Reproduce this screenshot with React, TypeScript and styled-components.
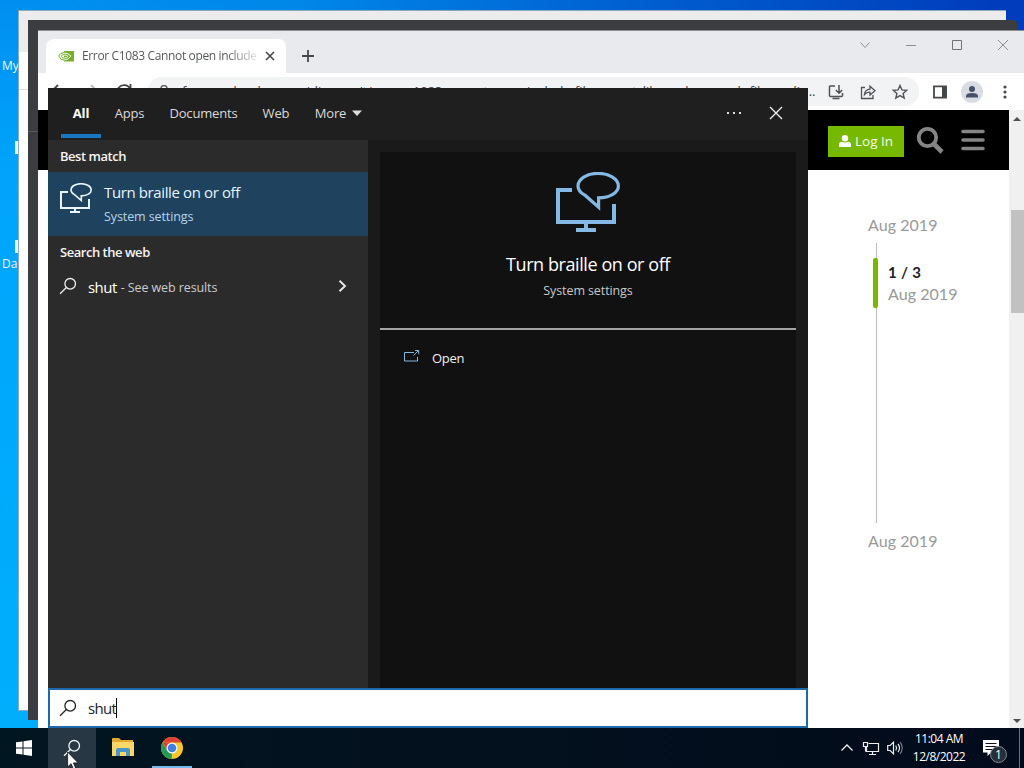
import type { ReactNode } from "react";
import styled, { createGlobalStyle } from "styled-components";

const ui = `"Open Sans", "Noto Sans", sans-serif`;

export default function App() {
    return (
        <>
            <GlobalStyle />
            <Screen>
                <Desktop>
                    <DesktopIcon $top={57}>My</DesktopIcon>
                    <IconEdge $top={141} />
                    <IconEdge $top={240} />
                    <DesktopIcon $top={255}>Da</DesktopIcon>
                    <LightWindow>
                        <LightTitle />
                        <LightLine />
                    </LightWindow>
                    <DarkWindow>
                        <DarkLine />
                    </DarkWindow>
                    <Browser />
                    <SearchPanel />
                </Desktop>
                <Taskbar />
                <Pointer viewBox="0 0 12 19">
                    <path d="M.6 1v15l3.5-3.3 2.3 5.4 2.3-1-2.3-5.2h4.8z" fill="#fff" stroke="#111" strokeWidth=".8" />
                </Pointer>
            </Screen>
        </>
    );
}

const Browser = () => (
    <BrowserWindow>
        <TabStrip>
            <Tab>
                <NvidiaIcon />
                <TabTitle>Error C1083 Cannot open include</TabTitle>
                <Icon $size={10} $color="#45484b" viewBox="0 0 10 10">
                    <path d="M1 1l8 8M9 1L1 9" strokeWidth="1.6" />
                </Icon>
            </Tab>
            <NewTab>
                <Icon $size={14} $color="#45484b" viewBox="0 0 14 14">
                    <path d="M7 1v12M1 7h12" strokeWidth="1.8" />
                </Icon>
            </NewTab>
            <WindowButtons>
                <Icon $size={12} $color="#8b8d91" viewBox="0 0 12 12">
                    <path d="M1.5 3.5L6 8.5l4.500-5" />
                </Icon>
                <Icon $size={12} $color="#8b8d91" viewBox="0 0 12 12">
                    <path d="M1 6.500h10" />
                </Icon>
                <Icon $size={12} $color="#707276" viewBox="0 0 12 12">
                    <path d="M1.500 1.500h9v9h-9z" />
                </Icon>
                <Icon $size={12} $color="#8b8d91" viewBox="0 0 12 12">
                    <path d="M1 1l10 10M11 1L1 11" />
                </Icon>
            </WindowButtons>
        </TabStrip>
        <Toolbar>
            <NavButtons>
                <Icon $size={16} $color="#45484b" viewBox="0 0 16 16">
                    <path d="M8 1L1 8l7 7M1 8h14" strokeWidth="1.8" />
                </Icon>
                <Icon $size={16} $color="#babcbe" viewBox="0 0 16 16">
                    <path d="M8 1l7 7-7 7M15 8H1" strokeWidth="1.8" />
                </Icon>
                <Icon $size={16} $color="#45484b" viewBox="0 0 16 16">
                    <path d="M14 4.500A7 7 0 1 0 15 9M14.500 0v5h-5" strokeWidth="1.800" />
                </Icon>
            </NavButtons>
            <AddressBar>
                <Icon $size={14} $color="#5f6368" viewBox="0 0 14 14">
                    <path d="M4 6V3.500a3 3 0 0 1 6 0V6M2.500 6h9v7h-9z" strokeWidth="1.500" />
                </Icon>
                <Address>
                    forums.developer.nvidia.com/t/error-c1083-cannot-open-include-file-exportslibrary-h-no-such-file-or-dir...
                </Address>
                <Icon $size={18} $color="#505357" viewBox="0 0 18 18">
                    <path d="M8 3H3.200Q2.500 3 2.500 4v8.500q0 1 1 1h11q1 0 1-1V10M5.500 15.500h7M12 2v8M8.800 7l3.200 3.200L15.200 7" strokeWidth="1.500" />
                </Icon>
                <Icon $size={18} $color="#505357" viewBox="0 0 18 18">
                    <path d="M6 4.500H2.500v11h11.500V12M5.500 11.500Q6 6.500 11 6.200V3.200L16 7.800l-5 4.200V9.200Q7.500 9 5.500 11.500z" strokeWidth="1.300" />
                </Icon>
                <Icon $size={18} $color="#505357" viewBox="0 0 18 18">
                    <path d="M9 2.500l1.900 4.400 4.800.4-3.600 3.100 1.100 4.700L9 12.600l-4.200 2.500 1.100-4.700-3.600-3.100 4.800-.4z" strokeWidth="1.400" />
                </Icon>
            </AddressBar>
            <ToolbarIcons>
                <Icon $size={14} $color="#45484b" viewBox="0 0 14 14">
                    <path d="M1 1.300h12v11.400H1z" strokeWidth="1.800" />
                    <path d="M9 1h4.500v12H9z" fill="currentColor" stroke="none" />
                </Icon>
                <Avatar>
                    <Icon $size={14} $color="#45506a" viewBox="0 0 14 14">
                        <g fill="currentColor" stroke="none">
                            <circle cx="7" cy="4" r="3" />
                            <path d="M1 12.500V11q0-3 6-3t6 3v1.500z" />
                        </g>
                    </Icon>
                </Avatar>
                <Icon $size={14} $color="#45484b" viewBox="0 0 14 14">
                    <g fill="currentColor" stroke="none">
                        <circle cx="7" cy="2" r="1.600" />
                        <circle cx="7" cy="7" r="1.600" />
                        <circle cx="7" cy="12" r="1.600" />
                    </g>
                </Icon>
            </ToolbarIcons>
        </Toolbar>
        <PageArea>
            <Page>
                <SiteHeader>
                    <LoginButton>
                        <Icon $size={12} $color="#fff" viewBox="0 0 12 12">
                            <g fill="currentColor" stroke="none">
                                <circle cx="6" cy="3.300" r="3.200" />
                                <path d="M0 12V9.500Q0 7 3 6.700q3 1.500 6 0 3 .3 3 2.800V12z" />
                            </g>
                        </Icon>
                        Log In
                    </LoginButton>
                    <Icon $size={28} $color="#858585" viewBox="0 0 28 28">
                        <circle cx="11.500" cy="11.500" r="8.700" strokeWidth="3.800" />
                        <path d="M18 18l8 8" strokeWidth="4.600" />
                    </Icon>
                    <Icon $size={24} $color="#858585" viewBox="0 0 24 24">
                        <path d="M2 3.500h20M2 12h20M2 20.500h20" strokeWidth="3.600" strokeLinecap="round" />
                    </Icon>
                </SiteHeader>
                <Timeline>
                    <TimelineDate>Aug 2019</TimelineDate>
                    <TimelineTrack>
                        <TimelineHandle />
                        <TimelinePosition>
                            <strong>1 / 3</strong>
                            <TimelineDate>Aug 2019</TimelineDate>
                        </TimelinePosition>
                    </TimelineTrack>
                    <TimelineDate>Aug 2019</TimelineDate>
                </Timeline>
            </Page>
            <Scrollbar>
                <Icon $size={8} $color="#505050" viewBox="0 0 8 8">
                    <path d="M0 6l4-4 4 4z" fill="currentColor" stroke="none" />
                </Icon>
                <Thumb />
                <Icon $size={8} $color="#505050" viewBox="0 0 8 8">
                    <path d="M0 2l4 4 4-4z" fill="currentColor" stroke="none" />
                </Icon>
            </Scrollbar>
        </PageArea>
    </BrowserWindow>
);

const SearchPanel = () => (
    <Panel>
        <PanelHeader>
            <Scope $width={40} $active>All</Scope>
            <Scope $width={57}>Apps</Scope>
            <Scope $width={91}>Documents</Scope>
            <Scope $width={54}>Web</Scope>
            <Scope $width={71}>
                More
                <Icon $size={10} $color="#ddd" viewBox="0 0 10 10">
                    <path d="M0 2.500h10L5 8z" fill="currentColor" stroke="none" />
                </Icon>
            </Scope>
            <HeaderButtons>
                <Icon $size={16} $color="#ddd" viewBox="0 0 16 16">
                    <path d="M1 7h2v2H1zM7 7h2v2H7zM13 7h2v2h-2z" fill="currentColor" stroke="none" />
                </Icon>
                <Icon $size={14} $color="#eee" viewBox="0 0 14 14">
                    <path d="M1 1l12 12M13 1L1 13" strokeWidth="1.400" />
                </Icon>
            </HeaderButtons>
        </PanelHeader>
        <PanelBody>
            <Results>
                <GroupTitle>Best match</GroupTitle>
                <BestMatch>
                    <BrailleIcon size={32} color="#e9f6ff" />
                    <div>
                        <ResultTitle>Turn braille on or off</ResultTitle>
                        <ResultKind>System settings</ResultKind>
                    </div>
                </BestMatch>
                <GroupTitle>Search the web</GroupTitle>
                <WebResult>
                    <Magnifier $color="#eee" />
                    <Query>shut</Query>
                    <Hint>- See web results</Hint>
                    <Icon $size={12} $color="#e4e4e4" viewBox="0 0 12 12">
                        <path d="M3.500.8L9 6l-5.500 5.200" strokeWidth="2" />
                    </Icon>
                </WebResult>
            </Results>
            <Preview>
                <PreviewHero>
                    <BrailleIcon size={64} color="#84b9e6" />
                    <PreviewTitle>Turn braille on or off</PreviewTitle>
                    <PreviewKind>System settings</PreviewKind>
                </PreviewHero>
                <Action>
                    <Icon $size={16} $color="#86b8df" viewBox="0 0 16 16">
                        <path d="M10 3.500H.5v8.500h13V8M9.500 6.500L14.500 1.500M11 1.500h3.700v3.700" />
                    </Icon>
                    Open
                </Action>
            </Preview>
        </PanelBody>
        <SearchBox>
            <Magnifier $color="#222" />
            <Typed>shut</Typed>
        </SearchBox>
    </Panel>
);

const Taskbar = () => (
    <Bar>
        <TaskButton>
            <Icon $size={16} $color="#fff" viewBox="0 0 16 16">
                <path d="M0 2.300l6.500-.9v6.100H0zM7.500 1.200L16 0v7.500H7.500zM0 8.500h6.500v6.100L0 13.700zM7.500 8.500H16V16l-8.500-1.200z" fill="currentColor" stroke="none" />
            </Icon>
        </TaskButton>
        <TaskButton $active>
            <Magnifier $color="#eef4f7" />
        </TaskButton>
        <TaskButton $wide>
            <Icon $size={22} $color="#000" viewBox="0 0 22 22">
                <g stroke="none">
                    <path d="M0 2q0-1 1-1h6l2 2h12v5H0z" fill="#e5a82c" />
                    <path d="M0 5h22v14H0z" fill="#fbd768" />
                    <path d="M4 19v-6q0-2 2-2h10q2 0 2 2v6h-4v-4H8v4z" fill="#4b94c8" />
                </g>
            </Icon>
        </TaskButton>
        <TaskButton $running>
            <Icon $size={22} $color="#000" viewBox="0 0 22 22">
                <g stroke="none">
                    <circle cx="11" cy="11" r="11" fill="#f8c72c" />
                    <path d="M1.500 5.500A11 11 0 0 1 20.500 5.500H11z" fill="#df4233" />
                    <path d="M1.500 5.500L6.200 13.700 11 16.500 11.200 22A11 11 0 0 1 1.500 5.500z" fill="#229b55" />
                    <path d="M1.500 5.500L6.300 13.800 11 5.500z" fill="#df4233" />
                    <path d="M10.500 22l4.800-8.500L11 16z" fill="#f8c72c" />
                    <circle cx="11" cy="11" r="5.500" fill="#f7fafb" />
                    <circle cx="11" cy="11" r="4.300" fill="#4080e5" />
                </g>
            </Icon>
        </TaskButton>
        <Tray>
            <Icon $size={12} $color="#eee" viewBox="0 0 12 12">
                <path d="M.5 8.500L6 3l5.500 5.500" strokeWidth="1.300" />
            </Icon>
            <Icon $size={18} $color="#eee" viewBox="0 0 18 18">
                <path d="M6.500 4.500h10v8h-12V8M10.500 12.500v3M7 15.500h7M1.500 3.500h4v4h-4zM3.500 7.500v5" strokeWidth="1.200" />
            </Icon>
            <Icon $size={16} $color="#eee" viewBox="0 0 16 16">
                <path d="M.7 5.500h2.500L6.500 2.200v11.600L3.200 10.500H.7zM8.800 5.500q1.500 2.500 0 5M11 3.800q3 4.200 0 8.400" strokeWidth="1.200" />
                <path d="M13.200 2.200q4 5.800 0 11.600" strokeWidth="1.200" opacity=".5" />
            </Icon>
        </Tray>
        <Clock>
            <ClockLine>11:04 AM</ClockLine>
            <ClockLine>12/8/2022</ClockLine>
        </Clock>
        <Notifications>
            <Icon $size={18} $color="#fff" viewBox="0 0 18 18">
                <path d="M1 1h16v12.500H9L5.500 17v-3.500H1z" fill="currentColor" stroke="none" />
                <path d="M3.500 4.500h11M3.500 7.500h11M3.500 10.500h7" stroke="#07111f" />
            </Icon>
            <Badge>1</Badge>
        </Notifications>
        <ShowDesktop />
    </Bar>
);

const Icon = ({ $size, $color, viewBox, children }: { $size: number; $color: string; viewBox: string; children: ReactNode }) => (
    <StyledIcon $size={$size} $color={$color} viewBox={viewBox}>{children}</StyledIcon>
);

const BrailleIcon = ({ size, color }: { size: number; color: string }) => (
    <Icon $size={size} $color={color} viewBox="0 0 32 32">
        <path d="M8 9H1v16h28v-9M15 25v3M10 29h10" strokeWidth="2" />
        <path d="M21.300 17.600v-4.700C27 12.800 31.200 10.300 31.200 7c0-3.500-4.500-6.300-10.200-6.300S11 3.500 11 7c0 2 1.300 3.500 3.500 4.600z" strokeWidth="1.600" />
    </Icon>
);

const Magnifier = ({ $color }: { $color: string }) => (
    <Icon $size={18} $color={$color} viewBox="0 0 18 18">
        <circle cx="11.200" cy="6.800" r="5.300" strokeWidth="1.300" />
        <path d="M7.400 10.500L1 16.700" strokeWidth="1.300" />
    </Icon>
);

const NvidiaIcon = () => (
    <Icon $size={16} $color="#76a82b" viewBox="0 0 16 16">
        <path d="M6 3h10v10.500H6z" fill="#76b02a" stroke="none" />
        <path d="M6 4.500Q2 5 .6 8 2.500 12 6 12.200M6 6.500Q3.800 6.800 3 8.200 4 10 6 10.200" />
        <path d="M6 5q4 0 7 3-3 4-7 4M6 7q2.500 0 4 1.300Q8.500 10 6 10" stroke="#f4f9e9" />
    </Icon>
);

const GlobalStyle = createGlobalStyle`
    * { box-sizing: border-box; }
    body { margin: 0; overflow: hidden; font-family: ${ui}; }
`

const StyledIcon = styled.svg<{ $size: number; $color: string }>`
    display: block;
    flex: none;
    width: ${p => p.$size}px;
    height: ${p => p.$size}px;
    color: ${p => p.$color};
    fill: none;
    stroke: currentColor;
`

const Screen = styled.div`
    position: relative;
    width: 1024px;
    height: 768px;
    overflow: hidden;
`

const Desktop = styled.div`
    position: relative;
    height: 728px;
    overflow: hidden;
    background: linear-gradient(90deg, transparent 30px, #0087e8 300px, #0061d2 620px, #003cbb 1000px), linear-gradient(#008ff0, #00a5fb 180px, #00aefc);
`

const DesktopIcon = styled.span<{ $top: number }>`
    position: absolute;
    left: 2px;
    top: ${p => p.$top}px;
    color: #e8f8ff;
    font-size: 12px;
    line-height: 18px;
`

const IconEdge = styled.div<{ $top: number }>`
    position: absolute;
    left: 15px;
    top: ${p => p.$top}px;
    width: 4px;
    height: 13px;
    background: #e7f7ff;
`

const LightWindow = styled.div`
    position: absolute;
    left: 18px;
    top: 10px;
    width: 988px;
    height: 701px;
    border: 1px solid #8aaabd;
    border-right: 0;
    background: #fff;
`

const LightTitle = styled.div`
    height: 41px;
    background: #ececec;
`

const LightLine = styled.div`
    height: 38px;
    border-bottom: 1px solid #ddd;
`

const DarkWindow = styled.div`
    position: absolute;
    left: 28px;
    top: 20px;
    width: 990px;
    height: 700px;
    border-radius: 0 5px 0 0;
    background: #3c3d40;
`

const DarkLine = styled.div`
    height: 112px;
    border-bottom: 1px solid #58595b;
`

const BrowserWindow = styled.div`
    position: absolute;
    left: 38px;
    top: 30px;
    display: flex;
    flex-direction: column;
    width: 986px;
    height: 698px;
    border-top: 1px solid #8b8c8f;
    background: #fff;
`

const TabStrip = styled.div`
    display: flex;
    height: 42px;
    padding: 8px 0 0 8px;
    background: #e8eaed;
`

const Tab = styled.div`
    display: flex;
    align-items: center;
    width: 240px;
    padding: 0 11px 0 12px;
    border-radius: 8px 8px 0 0;
    background: #fff;
`

const TabTitle = styled.span`
    flex: 1;
    margin: 0 0 1px 8px;
    white-space: nowrap;
    color: #55585b;
    font-size: 12px;
    letter-spacing: -0.36px;
    mask-image: linear-gradient(90deg, #000 145px, transparent 180px);
`

const NewTab = styled.div`
    display: flex;
    align-items: center;
    margin-left: 15px;
`

const WindowButtons = styled.div`
    display: flex;
    gap: 34px;
    margin: 0 15px 0 auto;
`

const Toolbar = styled.div`
    display: flex;
    align-items: center;
    flex: none;
    height: 38px;
    padding-left: 14px;
    border-bottom: 1px solid #ddd;
`

const NavButtons = styled.div`
    display: flex;
    gap: 17px;
    margin-left: -2px;
`

const AddressBar = styled.div`
    display: flex;
    align-items: center;
    gap: 14px;
    width: 771px;
    height: 29px;
    margin-left: 16px;
    padding: 0 10px 0 9px;
    border-radius: 14px;
    background: #f1f3f4;
`

const Address = styled.span`
    flex: 1;
    min-width: 0;
    margin: -2px -4px 0 -3px;
    white-space: nowrap;
    color: #3c4043;
    font-size: 13px;
    letter-spacing: -0.05px;
`

const ToolbarIcons = styled.div`
    display: flex;
    align-items: center;
    gap: 14px;
    margin-left: 14px;

    & > :last-child {
        margin-left: 1px;
    }
`

const Avatar = styled.div`
    display: grid;
    place-items: center;
    width: 22px;
    height: 22px;
    border-radius: 50%;
    background: #d9dce3;
`

const PageArea = styled.div`
    display: flex;
    flex: 1;
    margin-top: -1px;
`

const Page = styled.div`
    width: 971px;
`

const SiteHeader = styled.div`
    display: flex;
    align-items: center;
    gap: 17px;
    height: 60px;
    padding: 2px 24px 0 0;
    justify-content: flex-end;
    background: #000;

    & > svg {
        margin-bottom: 3px;
    }

    & > svg:nth-child(2) {
        margin-left: -5px;
    }
`

const LoginButton = styled.div`
    display: flex;
    align-items: center;
    justify-content: center;
    gap: 4px;
    width: 76px;
    height: 31px;
    background: #76b900;
    color: #f5fae9;
    font-size: 13.5px;
`

const Timeline = styled.div`
    margin: 44px 0 0 830px;
    color: #999;
    font-family: Lato, sans-serif;
    font-size: 16px;
    line-height: 22px;
`

const TimelineDate = styled.div`
    letter-spacing: 0.05px;
`

const TimelineTrack = styled.div`
    display: flex;
    height: 280px;
    margin: 7px 0 7px 8px;
    padding-top: 15px;
    border-left: 1px solid #bbb;
`

const TimelineHandle = styled.div`
    width: 5px;
    height: 50px;
    margin-left: -4px;
    border-radius: 2px;
    background: #76b900;
`

const TimelinePosition = styled.div`
    margin: 3px 0 0 10px;
    line-height: 21px;

    strong {
        color: #222;
        font-size: 15px;
        letter-spacing: 0.3px;
    }
`

const Scrollbar = styled.div`
    display: flex;
    flex-direction: column;
    align-items: center;
    flex: 1;
    padding: 5px 0 3px 1px;
    background: #f0f0f0;
`

const Thumb = styled.div`
    width: 13px;
    height: 103px;
    margin: 87px -1px auto 0;
    background: #c1c1c1;
`

const Panel = styled.div`
    position: absolute;
    left: 48px;
    top: 88px;
    display: flex;
    flex-direction: column;
    width: 760px;
    height: 640px;
    background: #1a1a1a;
    color: #fff;
`

const PanelHeader = styled.div`
    display: flex;
    height: 52px;
    padding-left: 13px;
    background: #1f1f1f;
`

const Scope = styled.div<{ $width: number; $active?: boolean }>`
    display: flex;
    align-items: center;
    justify-content: center;
    gap: 6px;
    width: ${p => p.$width}px;
    height: 50px;
    padding-top: 3px;
    border-bottom: 4px solid ${p => (p.$active ? "#1a78c2" : "transparent")};
    color: ${p => (p.$active ? "#fff" : "#dadada")};
    font-size: 13px;
    font-weight: ${p => (p.$active ? 700 : 400)};
    letter-spacing: -0.15px;
`

const HeaderButtons = styled.div`
    display: flex;
    align-items: center;
    gap: 27px;
    margin: 0 25px 2px auto;
`

const PanelBody = styled.div`
    display: flex;
    height: 548px;
`

const Results = styled.div`
    width: 320px;
    background: #2b2b2b;
`

const GroupTitle = styled.div`
    height: 32px;
    padding-left: 12px;
    color: #f4f4f4;
    font-size: 13px;
    font-weight: 600;
    line-height: 32px;
    letter-spacing: -0.47px;
`

const BestMatch = styled.div`
    display: flex;
    gap: 12px;
    height: 64px;
    padding: 11px 12px;
    background: #1f425f;
    color: #e4f5ff;
`

const ResultTitle = styled.div`
    margin-top: -1px;
    font-size: 15px;
    line-height: 20px;
    letter-spacing: -0.38px;
`

const ResultKind = styled.div`
    color: #b7d4e8;
    font-size: 12.5px;
    line-height: 18px;
    margin-top: 6px;
    letter-spacing: -0.1px;
`

const WebResult = styled.div`
    display: flex;
    align-items: center;
    height: 38px;
    padding: 0 20px 0 11px;

    & > svg {
        margin-bottom: 2px;
    }

    & > svg:last-child {
        margin-left: auto;
    }
`

const Query = styled.span`
    margin: 0 4px 1px 11px;
    font-size: 15px;
    letter-spacing: -0.55px;
`

const Hint = styled.span`
    color: #ccc;
    font-size: 12.5px;
    letter-spacing: -0.1px;
`

const Preview = styled.div`
    flex: 1;
    margin: 12px 12px 0;
    background: #111;
`

const PreviewHero = styled.div`
    display: flex;
    flex-direction: column;
    align-items: center;
    height: 178px;
    padding-top: 20px;
    border-bottom: 2px solid #a5a3a5;
`

const PreviewTitle = styled.div`
    margin-top: 15px;
    font-size: 18px;
    line-height: 26px;
    letter-spacing: -0.42px;
`

const PreviewKind = styled.div`
    margin-top: 5px;
    color: #c8c8c8;
    font-size: 12.5px;
    line-height: 18px;
    letter-spacing: -0.1px;
`

const Action = styled.div`
    display: flex;
    align-items: center;
    gap: 12px;
    height: 56px;
    padding-left: 24px;
    color: #f0f0f0;
    font-size: 13px;
    letter-spacing: -0.3px;

    & > svg {
        margin-bottom: 3px;
    }
`

const SearchBox = styled.div`
    display: flex;
    align-items: center;
    height: 40px;
    padding-left: 9px;
    border: 2px solid #1c6aa9;
    background: #fff;
`

const Typed = styled.span`
    margin-left: 11px;
    border-right: 1px solid #000;
    color: #222;
    font-size: 15px;
    line-height: 20px;
    letter-spacing: -0.7px;
`

const Bar = styled.div`
    display: flex;
    height: 40px;
    background: linear-gradient(90deg, #001620, #03121f 300px, #020b1b);
    color: #fff;
`

const TaskButton = styled.div<{ $active?: boolean; $wide?: boolean; $running?: boolean }>`
    display: grid;
    place-items: center;
    width: ${p => (p.$wide ? 53 : 48)}px;
    background: ${p => (p.$active ? "#273844" : "transparent")};
    ${p => p.$running && "margin-left: 3px; width: 40px; padding-top: 2px; border-bottom: 2px solid #76b9ed;"}
`

const Tray = styled.div`
    display: flex;
    align-items: center;
    gap: 7px;
    margin-left: auto;

    & > svg:nth-child(2) {
        margin-left: 2px;
    }
`

const Clock = styled.div`
    width: 54px;
    margin-left: 9px;
    padding-top: 2px;
    font-size: 12px;
    line-height: 18px;
    text-align: center;
    white-space: nowrap;
    letter-spacing: -0.5px;
`

const ClockLine = styled.div`
    margin: 0 -4px;
`

const Notifications = styled.div`
    position: relative;
    width: 53px;
    padding: 11px 0 0 16px;
`

const Badge = styled.span`
    position: absolute;
    left: 24px;
    top: 18px;
    width: 17px;
    height: 17px;
    border: 1px solid #81878e;
    border-radius: 50%;
    background: #26303a;
    font-size: 12px;
    line-height: 15px;
    text-align: center;
`

const ShowDesktop = styled.div`
    width: 5px;
    border-left: 1px solid #69727c;
`

const Pointer = styled.svg`
    position: absolute;
    left: 67px;
    top: 751px;
    width: 12px;
    height: 19px;
`
